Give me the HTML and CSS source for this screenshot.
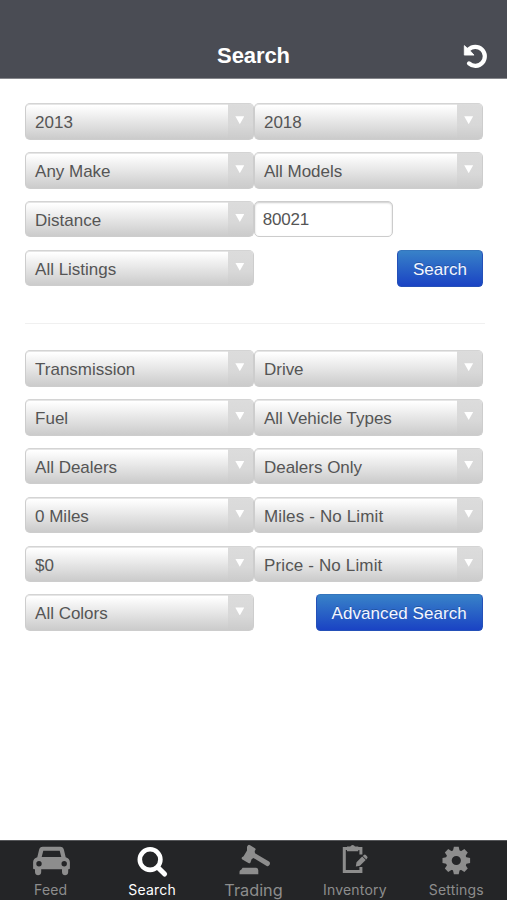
FILE: index.html
```html
<!DOCTYPE html>
<html lang="en">
<head>
<meta charset="utf-8">
<title>Search</title>
<link rel="stylesheet" href="styles.css">
</head>
<body>
<div class="app">
  <header class="navbar">
    <h1>Search</h1>
    <svg class="reset" width="30" height="30" viewBox="0 0 30 30"><path d="M8.6 8.6A9.5 9.5 0 1 1 9 22.4" fill="none" stroke="#fff" stroke-width="4.2" stroke-linecap="round"/><path d="M4.3 4.6V14.1H14L10.8 10.6L7.6 7.4Z" fill="#fff" stroke="#fff" stroke-width=".8" stroke-linejoin="round"/></svg>
  </header>
  <main>
    <section class="group">
      <div class="row"><div class="select"><span>2013</span><i></i></div><div class="select"><span>2018</span><i></i></div></div>
      <div class="row"><div class="select"><span>Any Make</span><i></i></div><div class="select"><span>All Models</span><i></i></div></div>
      <div class="row"><div class="select"><span>Distance</span><i></i></div><div class="zip">80021</div></div>
      <div class="row"><div class="select"><span>All Listings</span><i></i></div><button class="btn">Search</button></div>
    </section>
    <hr>
    <section class="group">
      <div class="row"><div class="select"><span>Transmission</span><i></i></div><div class="select"><span>Drive</span><i></i></div></div>
      <div class="row"><div class="select"><span>Fuel</span><i></i></div><div class="select"><span>All Vehicle Types</span><i></i></div></div>
      <div class="row"><div class="select"><span>All Dealers</span><i></i></div><div class="select"><span>Dealers Only</span><i></i></div></div>
      <div class="row"><div class="select"><span>0 Miles</span><i></i></div><div class="select wide"><span>Miles - No Limit</span><i></i></div></div>
      <div class="row"><div class="select"><span>$0</span><i></i></div><div class="select wide"><span>Price - No Limit</span><i></i></div></div>
      <div class="row"><div class="select"><span>All Colors</span><i></i></div><button class="btn advanced">Advanced Search</button></div>
    </section>
  </main>
  <nav class="tabbar">
    <div class="tab">
      <svg width="60" height="40" viewBox="0 0 60 40"><path fill="currentColor" fill-rule="evenodd" d="M21.8 6.8H39.2C41.3 6.8 42.4 7.9 42.9 9.8L44.7 17.2C47.2 17.8 48.9 19.6 48.9 22.2V28.2Q48.9 29.2 47.8 29.2H47.2V32C47.2 36.4 41 36.4 41 32V29.2H20.2V32C20.2 36.4 14 36.4 14 32V29.2H13.2Q12.1 29.2 12.1 28.2V22.2C12.1 19.6 13.8 17.8 16.3 17.2L18.1 9.8C18.6 7.9 19.7 6.8 21.8 6.8ZM22.3 10.8L20.7 17H40.3L38.7 10.8ZM18 21.1A2.7 2.7 0 1 0 18 26.5A2.7 2.7 0 1 0 18 21.1ZM43.2 21.1A2.7 2.7 0 1 0 43.2 26.5A2.7 2.7 0 1 0 43.2 21.1Z"/></svg>
      <span>Feed</span>
    </div>
    <div class="tab active">
      <svg width="60" height="40" viewBox="0 0 60 40"><circle cx="28.1" cy="19.6" r="10.3" fill="none" stroke="currentColor" stroke-width="4.6"/><path d="M35.7 27.2L42.6 34.1" stroke="currentColor" stroke-width="5" stroke-linecap="round"/></svg>
      <span>Search</span>
    </div>
    <div class="tab trading">
      <svg width="60" height="40" viewBox="0 0 60 40"><path fill="currentColor" d="M24 5.2Q25 4.4 26.1 5.2L31 8.2Q32 9 31.4 10.1L30.7 11.1L31 13.2L45 21.6Q46.6 22.7 45.6 24.8Q44.4 26.8 42.7 25.9L29.4 18L27.6 19.2L26.5 22.4Q25.8 23.9 24.4 23L18.4 19.4Q17.1 18.5 18 17.2L19.6 16.3L23 10.4V6.7ZM18.6 27.7H32.2Q34.3 27.7 34.3 30.2V34.2H15.5V31.8Q15.5 30 17.2 29.7Z"/></svg>
      <span>Trading</span>
    </div>
    <div class="tab">
      <svg width="60" height="40" viewBox="0 0 60 40"><path d="M24 8.4H19.3V31.6H35.9V27M32 8.4H35.9V14.4" fill="none" stroke="currentColor" stroke-width="3"/><path fill="currentColor" d="M22 6.6H25.3Q26 5 27.6 5Q29.3 5 30 6.6H33.3V11.2H22ZM30.8 26.6L31.5 22.3L37.2 16.6L40.7 20.1L34.9 25.8ZM37.8 16L38.9 14.9Q39.9 14.1 40.8 15L42.2 16.5Q43 17.4 42.2 18.3L41.3 19.5Z"/></svg>
      <span>Inventory</span>
    </div>
    <div class="tab">
      <svg width="60" height="40" viewBox="0 0 60 40"><g transform="translate(30.3 20.5)"><circle r="7.6" fill="none" stroke="currentColor" stroke-width="6"/><g fill="currentColor"><path id="tooth" d="M-3.5-9L-2.4-13.8H2.4L3.5-9Z"/><use href="#tooth" transform="rotate(45)"/><use href="#tooth" transform="rotate(90)"/><use href="#tooth" transform="rotate(135)"/><use href="#tooth" transform="rotate(180)"/><use href="#tooth" transform="rotate(225)"/><use href="#tooth" transform="rotate(270)"/><use href="#tooth" transform="rotate(315)"/></g></g></svg>
      <span>Settings</span>
    </div>
  </nav>
</div>
</body>
</html>
```
FILE: styles.css
```css
* { box-sizing: border-box; }
body { margin: 0; background: #fff; font-family: "Liberation Sans", Arial, sans-serif; }
.app { display: flex; flex-direction: column; width: 507px; height: 900px; overflow: hidden; }
.navbar {
  display: grid; grid-template-columns: 1fr auto 1fr; align-items: center;
  height: 79px; padding: 33px 17px 0; flex: none;
  background: #4a4c54; border-bottom: 1px solid #85868b; color: #fff;
}
.navbar h1 { grid-column: 2; margin: 0; font-size: 22px; line-height: 30px; letter-spacing: -.1px; }
.reset { justify-self: end; }
main { flex: 1; padding: 24.3px 24.3px 0 25.3px; }
.group { display: grid; row-gap: 12px; width: 457.4px; }
.row { display: flex; gap: .4px; height: 36.85px; }
.select {
  display: flex; justify-content: space-between; width: 228.5px; height: 36.5px;
  border: 1px solid #cdcdcd; border-top-color: #d4d4d4; border-radius: 5px; overflow: hidden;
  background: linear-gradient(#fff 5%, #f4f4f4 25%, #dedede 65%, #cbcbcb);
  box-shadow: inset 0 1px #e6e6e6;
  color: #555; font-size: 17px; line-height: 37px;
}
.select span { padding-left: 8.8px; letter-spacing: -.02px; }
.select.wide span { letter-spacing: .14px; }
.select i { width: 25px; background: linear-gradient(#dcdcdc, #d8d8d8 60%, #cbcbcb); padding: 12px 0 0 7.5px; }
.select i::before { content: ""; display: block; width: 9px; height: 8px; background: #fff; clip-path: polygon(0 0, 100% 0, 50% 100%); }
.zip {
  width: 139px; height: 36.5px; padding-left: 7.5px; border: 1.5px solid #ccc; border-radius: 5px;
  box-shadow: inset 0 1px 2px #ccc; color: #555; font-size: 17px; line-height: 36px; letter-spacing: -.2px;
}
.btn {
  width: 85.5px; height: 36.7px; margin-left: auto; padding: 1px 0 0; border: 1px solid #2450b8; border-top-color: #3575bd;
  border-radius: 4.5px; background: linear-gradient(#3882c8, #1a43c4);
  color: #f3f6ff; font: 17px/35px "Liberation Sans", Arial, sans-serif; text-shadow: 0 -1px 0 rgba(0,0,0,.2);
}
.advanced { width: 167px; letter-spacing: .08px; }
hr { height: 1px; width: 460px; margin: 36.6px 0 26px; border: 0; background: #f0f0f0; }
.tabbar { display: flex; height: 60px; flex: none; background: #242527; box-shadow: inset 0 1px #555659; color: #8d8d8d; }
.tab { display: flex; flex: 1; flex-direction: column; align-items: center; font-family: Inter, sans-serif; font-size: 14px; letter-spacing: .2px; }
.tab svg { display: block; flex: none; }
.tab span { line-height: 20px; }
.active { color: #fff; }
.trading { font-size: 16.3px; letter-spacing: 0; }
```
